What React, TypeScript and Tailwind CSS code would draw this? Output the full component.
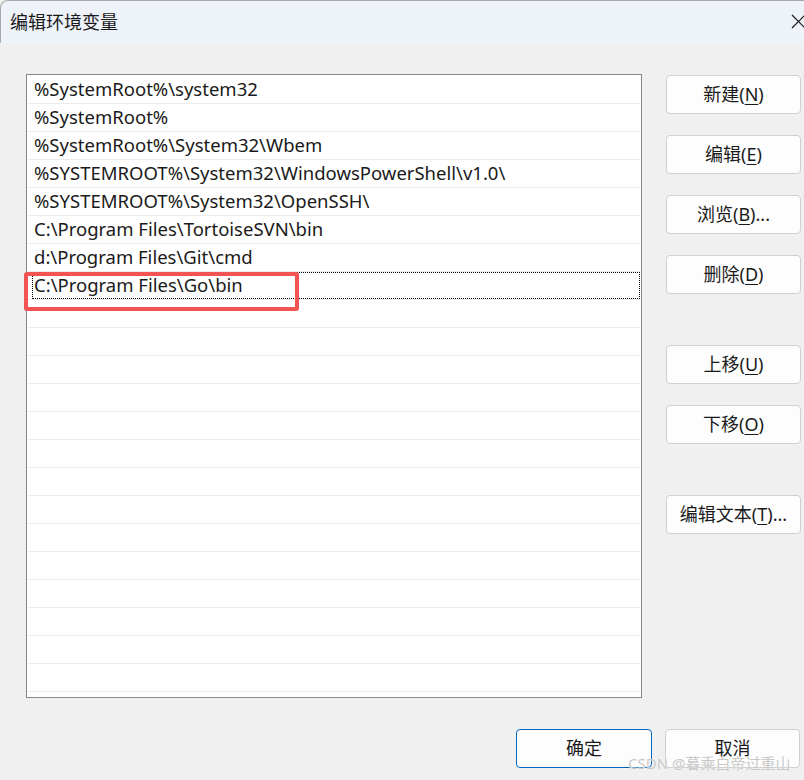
import React from "react";

const rows = [
  "%SystemRoot%\\system32",
  "%SystemRoot%",
  "%SystemRoot%\\System32\\Wbem",
  "%SYSTEMROOT%\\System32\\WindowsPowerShell\\v1.0\\",
  "%SYSTEMROOT%\\System32\\OpenSSH\\",
  "C:\\Program Files\\TortoiseSVN\\bin",
  "d:\\Program Files\\Git\\cmd",
  "C:\\Program Files\\Go\\bin",
];

const FONT = '"Noto Sans", "Noto Sans CJK SC", sans-serif';

function Btn({ label, key1, suffix = "", mt }: { label: string; key1: string; suffix?: string; mt: string }) {
  return (
    <div
      className={`${mt} flex h-[39px] w-[135px] items-center justify-center rounded-[4px] border border-[#d0d0d0] bg-[#fdfdfd] text-[18px] text-[#1a1a1a]`}
    >
      <span>
        {label}(<span className="underline underline-offset-[3px]">{key1}</span>){suffix}
      </span>
    </div>
  );
}

export default function App() {
  const allRows = Array.from({ length: 22 }, (_, i) => rows[i] ?? "");
  return (
    <div
      className="relative h-[780px] w-[804px] overflow-hidden bg-[#f0f0f0]"
      style={{ fontFamily: FONT }}
    >
      <div className="flex h-[43px] items-center justify-between rounded-tl-[8px] border-l border-t border-[#a8a8a8] bg-[#eef2f9] pl-[9px]">
        <span className="text-[18px] text-[#1a1a1a]">编辑环境变量</span>
        <svg width="15" height="15" viewBox="0 0 15 15" className="mr-[-2px] mt-[-1px]">
          <path d="M1 1 L14 14 M14 1 L1 14" stroke="#1a1a1a" strokeWidth="1.2" />
        </svg>
      </div>

      <div className="flex pl-[26px] pt-[31px]">
        <div className="relative h-[624px] w-[616px] border border-[#828790] bg-white pt-[1px]">
          {allRows.map((t, i) => (
            <div
              key={i}
              className="mx-[1px] flex h-[28px] items-center border-b border-[#ececec] pl-[6px] text-[18.5px] leading-none text-[#1a1a1a]"
            >
              {t}
            </div>
          ))}
          <div className="pointer-events-none absolute left-[5px] top-[197px] h-[27px] w-[608px] border border-dotted border-black" />
          <div className="pointer-events-none absolute left-[-3px] top-[197px] h-[39px] w-[275px] rounded-[3px] border-[4px] border-[#f25454]" />
        </div>

        <div className="ml-[24px] flex flex-col pt-[1px]">
          <Btn label="新建" key1="N" mt="" />
          <Btn label="编辑" key1="E" mt="mt-[21px]" />
          <Btn label="浏览" key1="B" suffix="..." mt="mt-[21px]" />
          <Btn label="删除" key1="D" mt="mt-[21px]" />
          <Btn label="上移" key1="U" mt="mt-[51px]" />
          <Btn label="下移" key1="O" mt="mt-[21px]" />
          <Btn label="编辑文本" key1="T" suffix="..." mt="mt-[51px]" />
        </div>
      </div>

      <div className="mt-[31px] flex justify-end gap-[13px] pr-[4px]">
        <div className="flex h-[39px] w-[136px] items-center justify-center rounded-[4px] border-[1.5px] border-[#0067c0] bg-[#fdfdfd] text-[18px] text-[#1a1a1a]">
          确定
        </div>
        <div className="flex h-[39px] w-[135px] items-center justify-center rounded-[4px] border border-[#d0d0d0] bg-[#fdfdfd] text-[18px] text-[#1a1a1a]">
          取消
        </div>
      </div>

      <div
        className="pointer-events-none absolute left-[628px] top-[753px] text-[15px] leading-[20px] text-[#c8c8c8]"
        style={{ textShadow: "0 0 1px #ffffff" }}
      >
        CSDN @暮乘白帝过重山
      </div>
    </div>
  );
}
